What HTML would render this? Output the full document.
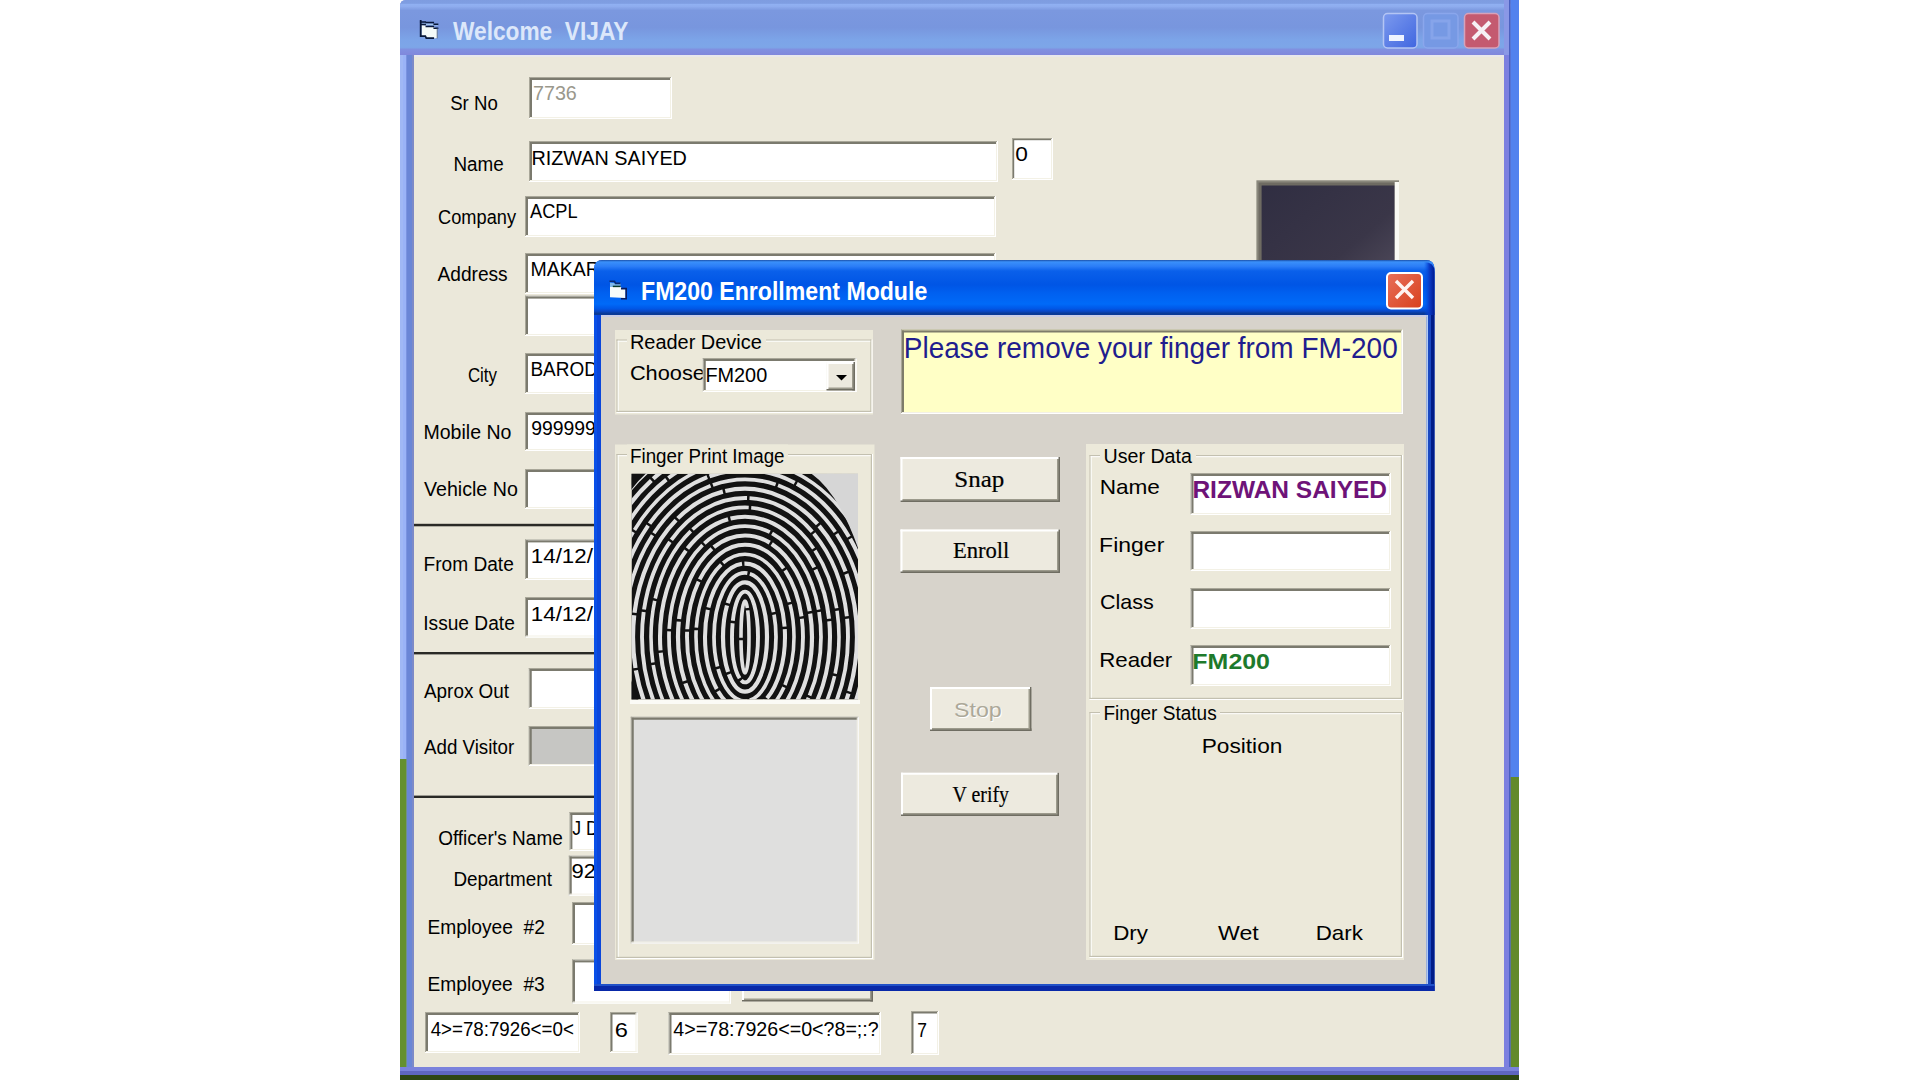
<!DOCTYPE html>
<html><head><meta charset="utf-8"><title>FM200 Enrollment Module</title>
<style>html,body{margin:0;padding:0;background:#FFFFFF;width:1920px;height:1080px;overflow:hidden}svg{display:block}</style>
</head><body>
<svg width="1920" height="1080" viewBox="0 0 1920 1080"><path d="M400,6 Q400,0 406,0 L1519,0 L1519,1075 L400,1075 Z" fill="#7A8DDF"/>
<defs>
<linearGradient id="tbi" x1="0" y1="0" x2="0" y2="1">
<stop offset="0" stop-color="#7E9CE0"/><stop offset="0.06" stop-color="#7F9EE2"/><stop offset="0.08" stop-color="#90B0F2"/>
<stop offset="0.12" stop-color="#8EACEE"/><stop offset="0.19" stop-color="#7B98DF"/><stop offset="0.5" stop-color="#7896DE"/><stop offset="0.72" stop-color="#7CA4E8"/>
<stop offset="0.86" stop-color="#7DA6E8"/><stop offset="0.9" stop-color="#8090E0"/><stop offset="1" stop-color="#8088DC"/>
</linearGradient>
<linearGradient id="tba" x1="0" y1="0" x2="0" y2="1">
<stop offset="0" stop-color="#1A50A8"/><stop offset="0.035" stop-color="#3A90FA"/><stop offset="0.12" stop-color="#2A7CF6"/>
<stop offset="0.2" stop-color="#0A60EA"/><stop offset="0.45" stop-color="#0055E5"/><stop offset="0.6" stop-color="#0060F0"/>
<stop offset="0.8" stop-color="#006AF8"/><stop offset="0.88" stop-color="#0058E8"/><stop offset="0.93" stop-color="#0A48C8"/>
<stop offset="0.97" stop-color="#0A3A98"/><stop offset="1" stop-color="#0A3A98"/>
</linearGradient>
<linearGradient id="minb" x1="0" y1="0" x2="1" y2="1">
<stop offset="0" stop-color="#7C9AEE"/><stop offset="1" stop-color="#4066E0"/>
</linearGradient>
<linearGradient id="clsb" x1="0" y1="0" x2="1" y2="1">
<stop offset="0" stop-color="#E8705A"/><stop offset="1" stop-color="#D8401C"/>
</linearGradient>
<linearGradient id="photo" x1="0" y1="0" x2="1" y2="1">
<stop offset="0" stop-color="#302E42"/><stop offset="0.6" stop-color="#3A3648"/><stop offset="1" stop-color="#555060"/>
</linearGradient>
<clipPath id="fpclip"><rect x="631.5" y="473.75" width="226.5" height="225.75"/></clipPath>
</defs>
<path d="M400,6 Q400,0 406,0 L1519,0 L1519,55 L400,55 Z" fill="url(#tbi)"/>
<rect x="400" y="55" width="3" height="1020" fill="#A0B8F5" />
<rect x="403" y="55" width="3.5" height="1020" fill="#9AB3F7" />
<rect x="406.5" y="55" width="5.5" height="1020" fill="#6A86D6" />
<rect x="412" y="55" width="2" height="1020" fill="#7C8AC8" />
<rect x="1503.5" y="55" width="5.5" height="1012" fill="#7C80E0" />
<rect x="1504" y="0" width="5" height="55" fill="#8A98E6" />
<rect x="1509" y="0" width="1.7" height="1075" fill="#4A60C0" />
<rect x="1510.7" y="0" width="8.3" height="777" fill="#5282EE" />
<rect x="1510.7" y="777" width="8.3" height="303" fill="#628A2A" />
<rect x="1503.5" y="1067" width="7.2" height="8" fill="#7A80E0" />
<rect x="400" y="759" width="6.5" height="321" fill="#64902E" />
<rect x="400" y="1067" width="1119" height="4" fill="#7A82DC" />
<rect x="400" y="1071" width="1119" height="4" fill="#5F66C0" />
<rect x="400" y="1075" width="1119" height="5" fill="#2E4614" />
<rect x="414" y="55" width="1090" height="1012" fill="#EBE8DA" />
<rect x="414" y="55" width="1090" height="2" fill="#E8E8EC" />
<g fill="none" stroke-linecap="square"><path d="M421.5,25 L433.5,26.8 L437,28.5 L437,38 L433.5,38.6 L426.5,37.8 L421.5,36.2 Z" fill="#F4FAF8" stroke="none"/><path d="M421,24 L425,24.2 L434,24.6 L437,25" fill="none" stroke="#A8CCEE" stroke-width="1.2"/><path d="M420.7,20.8 V36.2 H425.3 L426.3,38.2 H433.2" stroke="#08183A" stroke-width="1.8"/><path d="M420.7,21.9 H425.3 M426.3,22.4 H433.3 M421,24.4 H425.2 M434.2,24.3 H437.6 M426.3,26.4 H433.3 M434.2,28.2 H437.6" stroke="#08183A" stroke-width="1.5"/><path d="M437.2,29 V38" stroke="#6A7A90" stroke-width="1"/></g>
<text x="453.00" y="40" font-family="Liberation Sans" font-size="25" font-weight="700" fill="#DCE7FA" textLength="175.34" lengthAdjust="spacingAndGlyphs" xml:space="preserve" >Welcome  VIJAY</text>
<rect x="1383.5" y="13.5" width="33.5" height="34.5" rx="4" fill="url(#minb)" stroke="#B4C5F4" stroke-width="1.5"/>
<rect x="1389" y="35" width="15" height="6" fill="#EEF3FF" />
<rect x="1423.5" y="13.5" width="34.5" height="34.5" rx="4" fill="#7699E4" stroke="#8AA6EC" stroke-width="1.5"/>
<rect x="1432" y="21" width="17" height="17" fill="none" stroke="#86A4EA" stroke-width="3"/>
<rect x="1464.5" y="13.5" width="34.5" height="34.5" rx="4" fill="#C45A70" stroke="#D6A2BA" stroke-width="1.5"/>
<path d="M1473,22 L1490,39 M1490,22 L1473,39" stroke="#F6F0F4" stroke-width="4"/>
<text x="450.16" y="110" font-family="Liberation Sans" font-size="20" font-weight="400" fill="#000000" textLength="47.60" lengthAdjust="spacingAndGlyphs" xml:space="preserve" >Sr No</text>
<text x="453.49" y="171" font-family="Liberation Sans" font-size="20" font-weight="400" fill="#000000" textLength="50.28" lengthAdjust="spacingAndGlyphs" xml:space="preserve" >Name</text>
<text x="438.09" y="224" font-family="Liberation Sans" font-size="20" font-weight="400" fill="#000000" textLength="77.91" lengthAdjust="spacingAndGlyphs" xml:space="preserve" >Company</text>
<text x="437.50" y="281" font-family="Liberation Sans" font-size="20" font-weight="400" fill="#000000" textLength="70.17" lengthAdjust="spacingAndGlyphs" xml:space="preserve" >Address</text>
<text x="467.91" y="382" font-family="Liberation Sans" font-size="20" font-weight="400" fill="#000000" textLength="29.09" lengthAdjust="spacingAndGlyphs" xml:space="preserve" >City</text>
<text x="423.44" y="439" font-family="Liberation Sans" font-size="20" font-weight="400" fill="#000000" textLength="87.97" lengthAdjust="spacingAndGlyphs" xml:space="preserve" >Mobile No</text>
<text x="424.00" y="496" font-family="Liberation Sans" font-size="20" font-weight="400" fill="#000000" textLength="93.81" lengthAdjust="spacingAndGlyphs" xml:space="preserve" >Vehicle No</text>
<text x="423.47" y="570.6" font-family="Liberation Sans" font-size="20" font-weight="400" fill="#000000" textLength="90.32" lengthAdjust="spacingAndGlyphs" xml:space="preserve" >From Date</text>
<text x="423.28" y="630" font-family="Liberation Sans" font-size="20" font-weight="400" fill="#000000" textLength="91.51" lengthAdjust="spacingAndGlyphs" xml:space="preserve" >Issue Date</text>
<text x="424.00" y="697.5" font-family="Liberation Sans" font-size="20" font-weight="400" fill="#000000" textLength="85.05" lengthAdjust="spacingAndGlyphs" xml:space="preserve" >Aprox Out</text>
<text x="424.00" y="754.4" font-family="Liberation Sans" font-size="20" font-weight="400" fill="#000000" textLength="90.24" lengthAdjust="spacingAndGlyphs" xml:space="preserve" >Add Visitor</text>
<text x="438.15" y="845" font-family="Liberation Sans" font-size="20" font-weight="400" fill="#000000" textLength="124.64" lengthAdjust="spacingAndGlyphs" xml:space="preserve" >Officer's Name</text>
<text x="453.49" y="886" font-family="Liberation Sans" font-size="20" font-weight="400" fill="#000000" textLength="98.56" lengthAdjust="spacingAndGlyphs" xml:space="preserve" >Department</text>
<text x="427.46" y="933.75" font-family="Liberation Sans" font-size="20" font-weight="400" fill="#000000" textLength="117.42" lengthAdjust="spacingAndGlyphs" xml:space="preserve" >Employee  #2</text>
<text x="427.47" y="991" font-family="Liberation Sans" font-size="20" font-weight="400" fill="#000000" textLength="117.32" lengthAdjust="spacingAndGlyphs" xml:space="preserve" >Employee  #3</text>
<rect x="529" y="77" width="143" height="42" fill="#FFFFFF" />
<rect x="529" y="77" width="143" height="1" fill="#A9A799" />
<rect x="529" y="77" width="1" height="42" fill="#A9A799" />
<rect x="530" y="78" width="141" height="2.0" fill="#7B7A6E" />
<rect x="530" y="78" width="2.0" height="40" fill="#7B7A6E" />
<rect x="529" y="118" width="143" height="1" fill="#FFFFFF" />
<rect x="671" y="77" width="1" height="42" fill="#FFFFFF" />
<rect x="530" y="117" width="141" height="1" fill="#F3F1E6" />
<rect x="670" y="78" width="1" height="40" fill="#F3F1E6" />
<text x="533.02" y="100" font-family="Liberation Sans" font-size="20" font-weight="400" fill="#9A988C" textLength="43.79" lengthAdjust="spacingAndGlyphs" xml:space="preserve" >7736</text>
<rect x="529" y="141" width="469" height="41" fill="#FFFFFF" />
<rect x="529" y="141" width="469" height="1" fill="#A9A799" />
<rect x="529" y="141" width="1" height="41" fill="#A9A799" />
<rect x="530" y="142" width="467" height="2.0" fill="#7B7A6E" />
<rect x="530" y="142" width="2.0" height="39" fill="#7B7A6E" />
<rect x="529" y="181" width="469" height="1" fill="#FFFFFF" />
<rect x="997" y="141" width="1" height="41" fill="#FFFFFF" />
<rect x="530" y="180" width="467" height="1" fill="#F3F1E6" />
<rect x="996" y="142" width="1" height="39" fill="#F3F1E6" />
<text x="531.42" y="165" font-family="Liberation Sans" font-size="20" font-weight="400" fill="#000000" textLength="155.52" lengthAdjust="spacingAndGlyphs" xml:space="preserve" >RIZWAN SAIYED</text>
<rect x="1012" y="138" width="41" height="42" fill="#FFFFFF" />
<rect x="1012" y="138" width="41" height="1" fill="#A9A799" />
<rect x="1012" y="138" width="1" height="42" fill="#A9A799" />
<rect x="1013" y="139" width="39" height="1.2" fill="#7B7A6E" />
<rect x="1013" y="139" width="1.2" height="40" fill="#7B7A6E" />
<rect x="1012" y="179" width="41" height="1" fill="#FFFFFF" />
<rect x="1052" y="138" width="1" height="42" fill="#FFFFFF" />
<rect x="1013" y="178" width="39" height="1" fill="#F3F1E6" />
<rect x="1051" y="139" width="1" height="40" fill="#F3F1E6" />
<text x="1015.21" y="161" font-family="Liberation Sans" font-size="20" font-weight="400" fill="#000000" textLength="12.61" lengthAdjust="spacingAndGlyphs" xml:space="preserve" >0</text>
<rect x="525" y="196" width="471" height="41" fill="#FFFFFF" />
<rect x="525" y="196" width="471" height="1" fill="#A9A799" />
<rect x="525" y="196" width="1" height="41" fill="#A9A799" />
<rect x="526" y="197" width="469" height="2.0" fill="#7B7A6E" />
<rect x="526" y="197" width="2.0" height="39" fill="#7B7A6E" />
<rect x="525" y="236" width="471" height="1" fill="#FFFFFF" />
<rect x="995" y="196" width="1" height="41" fill="#FFFFFF" />
<rect x="526" y="235" width="469" height="1" fill="#F3F1E6" />
<rect x="994" y="197" width="1" height="39" fill="#F3F1E6" />
<text x="530.00" y="218" font-family="Liberation Sans" font-size="20" font-weight="400" fill="#000000" textLength="47.57" lengthAdjust="spacingAndGlyphs" xml:space="preserve" >ACPL</text>
<rect x="525" y="253" width="471" height="41" fill="#FFFFFF" />
<rect x="525" y="253" width="471" height="1" fill="#A9A799" />
<rect x="525" y="253" width="1" height="41" fill="#A9A799" />
<rect x="526" y="254" width="469" height="2.0" fill="#7B7A6E" />
<rect x="526" y="254" width="2.0" height="39" fill="#7B7A6E" />
<rect x="525" y="293" width="471" height="1" fill="#FFFFFF" />
<rect x="995" y="253" width="1" height="41" fill="#FFFFFF" />
<rect x="526" y="292" width="469" height="1" fill="#F3F1E6" />
<rect x="994" y="254" width="1" height="39" fill="#F3F1E6" />
<text x="530.44" y="276" font-family="Liberation Sans" font-size="20" font-weight="400" fill="#000000" textLength="69.38" lengthAdjust="spacingAndGlyphs" xml:space="preserve" >MAKAR</text>
<rect x="525" y="295.6" width="471" height="40.4" fill="#FFFFFF" />
<rect x="525" y="295.6" width="471" height="1.0" fill="#A9A799" />
<rect x="525" y="295.6" width="1" height="40.4" fill="#A9A799" />
<rect x="526" y="296.6" width="469" height="2.0" fill="#7B7A6E" />
<rect x="526" y="296.6" width="2.0" height="38.4" fill="#7B7A6E" />
<rect x="525" y="335" width="471" height="1" fill="#FFFFFF" />
<rect x="995" y="295.6" width="1" height="40.4" fill="#FFFFFF" />
<rect x="526" y="334" width="469" height="1" fill="#F3F1E6" />
<rect x="994" y="296.6" width="1" height="38.4" fill="#F3F1E6" />
<rect x="525" y="353" width="275" height="41" fill="#FFFFFF" />
<rect x="525" y="353" width="275" height="1" fill="#A9A799" />
<rect x="525" y="353" width="1" height="41" fill="#A9A799" />
<rect x="526" y="354" width="273" height="2.0" fill="#7B7A6E" />
<rect x="526" y="354" width="2.0" height="39" fill="#7B7A6E" />
<rect x="525" y="393" width="275" height="1" fill="#FFFFFF" />
<rect x="799" y="353" width="1" height="41" fill="#FFFFFF" />
<rect x="526" y="392" width="273" height="1" fill="#F3F1E6" />
<rect x="798" y="354" width="1" height="39" fill="#F3F1E6" />
<text x="530.48" y="375.6" font-family="Liberation Sans" font-size="20" font-weight="400" fill="#000000" textLength="67.41" lengthAdjust="spacingAndGlyphs" xml:space="preserve" >BAROD</text>
<rect x="525" y="412" width="275" height="39" fill="#FFFFFF" />
<rect x="525" y="412" width="275" height="1" fill="#A9A799" />
<rect x="525" y="412" width="1" height="39" fill="#A9A799" />
<rect x="526" y="413" width="273" height="2.0" fill="#7B7A6E" />
<rect x="526" y="413" width="2.0" height="37" fill="#7B7A6E" />
<rect x="525" y="450" width="275" height="1" fill="#FFFFFF" />
<rect x="799" y="412" width="1" height="39" fill="#FFFFFF" />
<rect x="526" y="449" width="273" height="1" fill="#F3F1E6" />
<rect x="798" y="413" width="1" height="37" fill="#F3F1E6" />
<text x="531.13" y="435" font-family="Liberation Sans" font-size="20" font-weight="400" fill="#000000" textLength="64.77" lengthAdjust="spacingAndGlyphs" xml:space="preserve" >999999</text>
<rect x="525" y="469" width="275" height="40" fill="#FFFFFF" />
<rect x="525" y="469" width="275" height="1" fill="#A9A799" />
<rect x="525" y="469" width="1" height="40" fill="#A9A799" />
<rect x="526" y="470" width="273" height="2.0" fill="#7B7A6E" />
<rect x="526" y="470" width="2.0" height="38" fill="#7B7A6E" />
<rect x="525" y="508" width="275" height="1" fill="#FFFFFF" />
<rect x="799" y="469" width="1" height="40" fill="#FFFFFF" />
<rect x="526" y="507" width="273" height="1" fill="#F3F1E6" />
<rect x="798" y="470" width="1" height="38" fill="#F3F1E6" />
<rect x="414" y="523.8" width="686" height="2.5" fill="#2A2A26" />
<rect x="525" y="539.4" width="275" height="40.6" fill="#FFFFFF" />
<rect x="525" y="539.4" width="275" height="1.0" fill="#A9A799" />
<rect x="525" y="539.4" width="1" height="40.6" fill="#A9A799" />
<rect x="526" y="540.4" width="273" height="2.0" fill="#7B7A6E" />
<rect x="526" y="540.4" width="2.0" height="38.6" fill="#7B7A6E" />
<rect x="525" y="579" width="275" height="1" fill="#FFFFFF" />
<rect x="799" y="539.4" width="1" height="40.6" fill="#FFFFFF" />
<rect x="526" y="578" width="273" height="1" fill="#F3F1E6" />
<rect x="798" y="540.4" width="1" height="38.6" fill="#F3F1E6" />
<text x="530.82" y="563" font-family="Liberation Sans" font-size="20" font-weight="400" fill="#000000" textLength="62.13" lengthAdjust="spacingAndGlyphs" xml:space="preserve" >14/12/</text>
<rect x="525" y="597" width="275" height="40.5" fill="#FFFFFF" />
<rect x="525" y="597" width="275" height="1" fill="#A9A799" />
<rect x="525" y="597" width="1" height="40.5" fill="#A9A799" />
<rect x="526" y="598" width="273" height="2.0" fill="#7B7A6E" />
<rect x="526" y="598" width="2.0" height="38.5" fill="#7B7A6E" />
<rect x="525" y="636.5" width="275" height="1.0" fill="#FFFFFF" />
<rect x="799" y="597" width="1" height="40.5" fill="#FFFFFF" />
<rect x="526" y="635.5" width="273" height="1.0" fill="#F3F1E6" />
<rect x="798" y="598" width="1" height="38.5" fill="#F3F1E6" />
<text x="530.82" y="620.6" font-family="Liberation Sans" font-size="20" font-weight="400" fill="#000000" textLength="62.13" lengthAdjust="spacingAndGlyphs" xml:space="preserve" >14/12/</text>
<rect x="414" y="652" width="686" height="2.4" fill="#2A2A26" />
<rect x="528.75" y="668" width="271.25" height="41" fill="#FFFFFF" />
<rect x="528.75" y="668" width="271.25" height="1" fill="#A9A799" />
<rect x="528.75" y="668" width="1.0" height="41" fill="#A9A799" />
<rect x="529.75" y="669" width="269.25" height="2.0" fill="#7B7A6E" />
<rect x="529.75" y="669" width="2.0" height="39" fill="#7B7A6E" />
<rect x="528.75" y="708" width="271.25" height="1" fill="#FFFFFF" />
<rect x="799" y="668" width="1" height="41" fill="#FFFFFF" />
<rect x="529.75" y="707" width="269.25" height="1" fill="#F3F1E6" />
<rect x="798" y="669" width="1" height="39" fill="#F3F1E6" />
<rect x="528.75" y="726" width="271.25" height="40" fill="#C6C6C3" />
<rect x="528.75" y="726" width="271.25" height="1" fill="#A9A799" />
<rect x="528.75" y="726" width="1.0" height="40" fill="#A9A799" />
<rect x="529.75" y="727" width="269.25" height="2.0" fill="#7B7A6E" />
<rect x="529.75" y="727" width="2.0" height="38" fill="#7B7A6E" />
<rect x="528.75" y="765" width="271.25" height="1" fill="#FFFFFF" />
<rect x="799" y="726" width="1" height="40" fill="#FFFFFF" />
<rect x="529.75" y="764" width="269.25" height="1" fill="#F3F1E6" />
<rect x="798" y="727" width="1" height="38" fill="#F3F1E6" />
<rect x="414" y="795.6" width="686" height="2.4" fill="#2A2A26" />
<rect x="569.4" y="812" width="230.6" height="39" fill="#FFFFFF" />
<rect x="569.4" y="812" width="230.6" height="1" fill="#A9A799" />
<rect x="569.4" y="812" width="1.0" height="39" fill="#A9A799" />
<rect x="570.4" y="813" width="228.6" height="2.0" fill="#7B7A6E" />
<rect x="570.4" y="813" width="2.0" height="37" fill="#7B7A6E" />
<rect x="569.4" y="850" width="230.6" height="1" fill="#FFFFFF" />
<rect x="799" y="812" width="1" height="39" fill="#FFFFFF" />
<rect x="570.4" y="849" width="228.6" height="1" fill="#F3F1E6" />
<rect x="798" y="813" width="1" height="37" fill="#F3F1E6" />
<text x="572.23" y="835" font-family="Liberation Sans" font-size="20" font-weight="400" fill="#000000" textLength="26.60" lengthAdjust="spacingAndGlyphs" xml:space="preserve" >J D</text>
<rect x="568.75" y="855.6" width="231.25" height="40.0" fill="#FFFFFF" />
<rect x="568.75" y="855.6" width="231.25" height="1.0" fill="#A9A799" />
<rect x="568.75" y="855.6" width="1.0" height="40.0" fill="#A9A799" />
<rect x="569.75" y="856.6" width="229.25" height="2.0" fill="#7B7A6E" />
<rect x="569.75" y="856.6" width="2.0" height="38.0" fill="#7B7A6E" />
<rect x="568.75" y="894.6" width="231.25" height="1.0" fill="#FFFFFF" />
<rect x="799" y="855.6" width="1" height="40.0" fill="#FFFFFF" />
<rect x="569.75" y="893.6" width="229.25" height="1.0" fill="#F3F1E6" />
<rect x="798" y="856.6" width="1" height="38.0" fill="#F3F1E6" />
<text x="571.51" y="878" font-family="Liberation Sans" font-size="20" font-weight="400" fill="#000000" textLength="24.51" lengthAdjust="spacingAndGlyphs" xml:space="preserve" >92</text>
<rect x="572" y="902" width="228" height="43" fill="#FFFFFF" />
<rect x="572" y="902" width="228" height="1" fill="#A9A799" />
<rect x="572" y="902" width="1" height="43" fill="#A9A799" />
<rect x="573" y="903" width="226" height="2.0" fill="#7B7A6E" />
<rect x="573" y="903" width="2.0" height="41" fill="#7B7A6E" />
<rect x="572" y="944" width="228" height="1" fill="#FFFFFF" />
<rect x="799" y="902" width="1" height="43" fill="#FFFFFF" />
<rect x="573" y="943" width="226" height="1" fill="#F3F1E6" />
<rect x="798" y="903" width="1" height="41" fill="#F3F1E6" />
<rect x="572" y="959.4" width="159" height="44.1" fill="#FFFFFF" />
<rect x="572" y="959.4" width="159" height="1.0" fill="#A9A799" />
<rect x="572" y="959.4" width="1" height="44.1" fill="#A9A799" />
<rect x="573" y="960.4" width="157" height="2.0" fill="#7B7A6E" />
<rect x="573" y="960.4" width="2.0" height="42.1" fill="#7B7A6E" />
<rect x="572" y="1002.5" width="159" height="1.0" fill="#FFFFFF" />
<rect x="730" y="959.4" width="1" height="44.1" fill="#FFFFFF" />
<rect x="573" y="1001.5" width="157" height="1.0" fill="#F3F1E6" />
<rect x="729" y="960.4" width="1" height="42.1" fill="#F3F1E6" />
<rect x="742" y="960" width="131" height="41.5" fill="#EDEADF" />
<rect x="742" y="960" width="131" height="2" fill="#FFFFFF" />
<rect x="742" y="960" width="2" height="41.5" fill="#FFFFFF" />
<rect x="744" y="998.5" width="129" height="2.0" fill="#9C9A8C" />
<rect x="870" y="962" width="2" height="39.5" fill="#9C9A8C" />
<rect x="742" y="1000.0" width="131" height="1.5" fill="#6F6D62" />
<rect x="871.5" y="960" width="1.5" height="41.5" fill="#6F6D62" />
<rect x="425" y="1012" width="155" height="41" fill="#FFFFFF" />
<rect x="425" y="1012" width="155" height="1" fill="#A9A799" />
<rect x="425" y="1012" width="1" height="41" fill="#A9A799" />
<rect x="426" y="1013" width="153" height="2.0" fill="#7B7A6E" />
<rect x="426" y="1013" width="2.0" height="39" fill="#7B7A6E" />
<rect x="425" y="1052" width="155" height="1" fill="#FFFFFF" />
<rect x="579" y="1012" width="1" height="41" fill="#FFFFFF" />
<rect x="426" y="1051" width="153" height="1" fill="#F3F1E6" />
<rect x="578" y="1013" width="1" height="39" fill="#F3F1E6" />
<text x="430.63" y="1036" font-family="Liberation Sans" font-size="20" font-weight="400" fill="#000000" textLength="143.20" lengthAdjust="spacingAndGlyphs" xml:space="preserve" >4&gt;=78:7926&lt;=0&lt;</text>
<rect x="610" y="1012" width="27.5" height="41" fill="#FFFFFF" />
<rect x="610" y="1012" width="27.5" height="1" fill="#A9A799" />
<rect x="610" y="1012" width="1" height="41" fill="#A9A799" />
<rect x="611" y="1013" width="25.5" height="1.5" fill="#7B7A6E" />
<rect x="611" y="1013" width="1.5" height="39" fill="#7B7A6E" />
<rect x="610" y="1052" width="27.5" height="1" fill="#FFFFFF" />
<rect x="636.5" y="1012" width="1.0" height="41" fill="#FFFFFF" />
<rect x="611" y="1051" width="25.5" height="1" fill="#F3F1E6" />
<rect x="635.5" y="1013" width="1.0" height="39" fill="#F3F1E6" />
<text x="614.82" y="1036.5" font-family="Liberation Sans" font-size="20" font-weight="400" fill="#000000" textLength="13.16" lengthAdjust="spacingAndGlyphs" xml:space="preserve" >6</text>
<rect x="668.5" y="1012" width="212.5" height="43" fill="#FFFFFF" />
<rect x="668.5" y="1012" width="212.5" height="1" fill="#A9A799" />
<rect x="668.5" y="1012" width="1.0" height="43" fill="#A9A799" />
<rect x="669.5" y="1013" width="210.5" height="2.0" fill="#7B7A6E" />
<rect x="669.5" y="1013" width="2.0" height="41" fill="#7B7A6E" />
<rect x="668.5" y="1054" width="212.5" height="1" fill="#FFFFFF" />
<rect x="880" y="1012" width="1" height="43" fill="#FFFFFF" />
<rect x="669.5" y="1053" width="210.5" height="1" fill="#F3F1E6" />
<rect x="879" y="1013" width="1" height="41" fill="#F3F1E6" />
<text x="673.36" y="1036" font-family="Liberation Sans" font-size="20" font-weight="400" fill="#000000" textLength="205.35" lengthAdjust="spacingAndGlyphs" xml:space="preserve" >4&gt;=78:7926&lt;=0&lt;?8=;:?</text>
<rect x="911" y="1011" width="28" height="44" fill="#FFFFFF" />
<rect x="911" y="1011" width="28" height="1" fill="#A9A799" />
<rect x="911" y="1011" width="1" height="44" fill="#A9A799" />
<rect x="912" y="1012" width="26" height="1.5" fill="#7B7A6E" />
<rect x="912" y="1012" width="1.5" height="42" fill="#7B7A6E" />
<rect x="911" y="1054" width="28" height="1" fill="#FFFFFF" />
<rect x="938" y="1011" width="1" height="44" fill="#FFFFFF" />
<rect x="912" y="1053" width="26" height="1" fill="#F3F1E6" />
<rect x="937" y="1012" width="1" height="42" fill="#F3F1E6" />
<text x="917.13" y="1036.6" font-family="Liberation Sans" font-size="20" font-weight="400" fill="#000000" textLength="9.67" lengthAdjust="spacingAndGlyphs" xml:space="preserve" >7</text>
<rect x="1256.4" y="180.3" width="142.6" height="119.7" fill="#8A887C" />
<rect x="1258.5" y="182.5" width="140.5" height="117.5" fill="#6E6B62" />
<rect x="1261.6" y="185.5" width="133.1" height="114.5" fill="url(#photo)" />
<rect x="1394.7" y="182" width="4.3" height="118" fill="#FAFAF4" />
<path d="M594,269 Q594,260 603,260 L1425.5,260 Q1434.5,260 1434.5,269 L1434.5,991 L594,991 Z" fill="#0A46DA"/>
<path d="M594,269 Q594,260 603,260 L1425.5,260 Q1434.5,260 1434.5,269 L1434.5,315 L594,315 Z" fill="url(#tba)"/>
<rect x="594" y="315" width="3" height="676" fill="#0A50E8" />
<rect x="1426.5" y="315" width="1.5" height="669" fill="#B0CAF6" />
<rect x="1428" y="315" width="3" height="676" fill="#1A48C0" />
<rect x="1431" y="315" width="3.5" height="676" fill="#001C88" />
<rect x="594" y="984" width="840.5" height="2" fill="#2050C8" />
<rect x="594" y="986" width="840.5" height="5" fill="#0828A8" />
<rect x="601" y="315" width="825.5" height="669" fill="#D7D3CB" />
<rect x="601" y="315" width="825.5" height="2" fill="#CACDE6" />
<defs><linearGradient id="dre" x1="0" y1="0" x2="1" y2="0"><stop offset="0" stop-color="#0050E8" stop-opacity="0"/><stop offset="0.5" stop-color="#0A3CC8"/><stop offset="1" stop-color="#001A90"/></linearGradient></defs>
<path d="M1424,262 Q1434.5,262 1434.5,272 L1434.5,315 L1424,315 Z" fill="url(#dre)"/>
<g fill="none"><path d="M610,282.5 L620.5,283.5 L620.5,287 L610,287 Z" fill="#7EB8EC"/><path d="M610,287 L621,287 L622,289 L625.5,289 L625.5,298 L610,297.2 Z" fill="#F6FBFA"/><path d="M609.5,281.2 H614.5 L615.5,283.4 H620.4" stroke="#0A2A70" stroke-width="1.6"/><path d="M612.8,286.4 H620.6" stroke="#0A3A2A" stroke-width="1.5"/><path d="M621,288.6 H626.2 V298.8 H621" stroke="#0A1E60" stroke-width="1.6"/></g>
<text x="641.02" y="299.5" font-family="Liberation Sans" font-size="25" font-weight="700" fill="#FFFFFF" textLength="286.22" lengthAdjust="spacingAndGlyphs" xml:space="preserve" >FM200 Enrollment Module</text>
<rect x="1387" y="273" width="35" height="35.5" rx="4" fill="url(#clsb)" stroke="#FFFFFF" stroke-width="2"/>
<path d="M1396,281 L1413,298 M1413,281 L1396,298" stroke="#FFF4F0" stroke-width="3.4"/>
<rect x="615" y="330" width="258" height="84.5" fill="#ECE9DA" />
<rect x="616.5" y="339.5" width="255.0" height="1.2" fill="#C3C0B0" />
<rect x="616.5" y="339.5" width="1.2" height="72.5" fill="#C3C0B0" />
<rect x="616.5" y="410.8" width="255.0" height="1.2" fill="#C3C0B0" />
<rect x="870.3" y="339.5" width="1.2" height="72.5" fill="#C3C0B0" />
<rect x="617.7" y="340.7" width="252.6" height="1.0" fill="#FFFFFF" />
<rect x="617.7" y="340.7" width="1.0" height="70.1" fill="#FFFFFF" />
<rect x="616.5" y="412" width="256.0" height="1" fill="#FFFFFF" />
<rect x="871.5" y="339.5" width="1.0" height="73.5" fill="#FFFFFF" />
<rect x="627" y="330" width="139" height="16" fill="#ECE9DA" />
<text x="629.90" y="348.5" font-family="Liberation Sans" font-size="20" font-weight="400" fill="#000000" textLength="131.92" lengthAdjust="spacingAndGlyphs" xml:space="preserve" >Reader Device</text>
<text x="629.91" y="380" font-family="Liberation Sans" font-size="20" font-weight="400" fill="#000000" textLength="74.98" lengthAdjust="spacingAndGlyphs" xml:space="preserve" >Choose</text>
<rect x="702.75" y="358" width="153.75" height="34" fill="#FFFFFF" />
<rect x="702.75" y="358" width="153.75" height="1" fill="#A9A799" />
<rect x="702.75" y="358" width="1.0" height="34" fill="#A9A799" />
<rect x="703.75" y="359" width="151.75" height="2.0" fill="#7B7A6E" />
<rect x="703.75" y="359" width="2.0" height="32" fill="#7B7A6E" />
<rect x="702.75" y="391" width="153.75" height="1" fill="#FFFFFF" />
<rect x="855.5" y="358" width="1.0" height="34" fill="#FFFFFF" />
<rect x="703.75" y="390" width="151.75" height="1" fill="#F3F1E6" />
<rect x="854.5" y="359" width="1.0" height="32" fill="#F3F1E6" />
<text x="705.41" y="381.5" font-family="Liberation Sans" font-size="20" font-weight="400" fill="#000000" textLength="61.81" lengthAdjust="spacingAndGlyphs" xml:space="preserve" >FM200</text>
<rect x="826.5" y="362" width="28.5" height="28.5" fill="#ECE9DE" />
<rect x="826.5" y="362" width="28.5" height="2" fill="#FFFFFF" />
<rect x="826.5" y="362" width="2.0" height="28.5" fill="#FFFFFF" />
<rect x="828.5" y="387.5" width="26.5" height="2.0" fill="#9C9A8C" />
<rect x="852" y="364" width="2" height="26.5" fill="#9C9A8C" />
<rect x="826.5" y="389.0" width="28.5" height="1.5" fill="#6F6D62" />
<rect x="853.5" y="362" width="1.5" height="28.5" fill="#6F6D62" />
<path d="M836,375 L847,375 L841.5,380.5 Z" fill="#000"/>
<rect x="901" y="329.5" width="502" height="84.5" fill="#FFFFC6" />
<rect x="901" y="329.5" width="502" height="1.0" fill="#A9A799" />
<rect x="901" y="329.5" width="1" height="84.5" fill="#A9A799" />
<rect x="902" y="330.5" width="500" height="2.0" fill="#7E7C6A" />
<rect x="902" y="330.5" width="2.0" height="82.5" fill="#7E7C6A" />
<rect x="901" y="413" width="502" height="1" fill="#FFFFFF" />
<rect x="1402" y="329.5" width="1" height="84.5" fill="#FFFFFF" />
<rect x="902" y="412" width="500" height="1" fill="#F3F1E6" />
<rect x="1401" y="330.5" width="1" height="82.5" fill="#F3F1E6" />
<text x="903.82" y="358" font-family="Liberation Sans" font-size="29" font-weight="400" fill="#211D8E" textLength="493.88" lengthAdjust="spacingAndGlyphs" xml:space="preserve" >Please remove your finger from FM-200</text>
<rect x="615" y="444.5" width="259.5" height="515.5" fill="#ECE9DA" />
<rect x="616.5" y="454" width="255.5" height="1.2" fill="#C3C0B0" />
<rect x="616.5" y="454" width="1.2" height="504" fill="#C3C0B0" />
<rect x="616.5" y="956.8" width="255.5" height="1.2" fill="#C3C0B0" />
<rect x="870.8" y="454" width="1.2" height="504" fill="#C3C0B0" />
<rect x="617.7" y="455.2" width="253.1" height="1.0" fill="#FFFFFF" />
<rect x="617.7" y="455.2" width="1.0" height="501.6" fill="#FFFFFF" />
<rect x="616.5" y="958" width="256.5" height="1" fill="#FFFFFF" />
<rect x="872" y="454" width="1" height="505" fill="#FFFFFF" />
<rect x="627" y="444.5" width="161" height="15.5" fill="#ECE9DA" />
<text x="630.00" y="462.5" font-family="Liberation Sans" font-size="20" font-weight="400" fill="#000000" textLength="154.53" lengthAdjust="spacingAndGlyphs" xml:space="preserve" >Finger Print Image</text>
<g clip-path="url(#fpclip)"><rect x="631.5" y="473.75" width="226.5" height="225.75" fill="#121212"/><ellipse cx="745" cy="637" rx="4.0" ry="36.0" fill="none" stroke="#E0E0E0" stroke-width="3.60" stroke-dasharray="70,2.5,45,2.5" stroke-dashoffset="0"/><ellipse cx="745" cy="637" rx="13.0" ry="45.4" fill="none" stroke="#E0E0E0" stroke-width="3.90" stroke-dasharray="83,2.5,56,2.5" stroke-dashoffset="29"/><ellipse cx="745" cy="637" rx="22.0" ry="54.7" fill="none" stroke="#E0E0E0" stroke-width="4.20" stroke-dasharray="96,2.5,67,2.5" stroke-dashoffset="8"/><ellipse cx="745" cy="637" rx="31.0" ry="64.1" fill="none" stroke="#E0E0E0" stroke-width="3.75" stroke-dasharray="109,2.5,47,2.5" stroke-dashoffset="37"/><ellipse cx="745" cy="637" rx="40.0" ry="73.4" fill="none" stroke="#E0E0E0" stroke-width="4.05" stroke-dasharray="81,2.5,58,2.5" stroke-dashoffset="16"/><ellipse cx="745" cy="637" rx="49.0" ry="82.8" fill="none" stroke="#E0E0E0" stroke-width="3.60" stroke-dasharray="94,2.5,69,2.5" stroke-dashoffset="45"/><ellipse cx="745" cy="637" rx="58.0" ry="92.2" fill="none" stroke="#E0E0E0" stroke-width="3.90" stroke-dasharray="107,2.5,49,2.5" stroke-dashoffset="24"/><ellipse cx="745" cy="637" rx="67.0" ry="101.5" fill="none" stroke="#E0E0E0" stroke-width="4.20" stroke-dasharray="79,2.5,60,2.5" stroke-dashoffset="3"/><ellipse cx="745" cy="637" rx="76.0" ry="110.9" fill="none" stroke="#E0E0E0" stroke-width="3.75" stroke-dasharray="92,2.5,71,2.5" stroke-dashoffset="32"/><ellipse cx="745" cy="637" rx="85.0" ry="120.2" fill="none" stroke="#E0E0E0" stroke-width="4.05" stroke-dasharray="105,2.5,51,2.5" stroke-dashoffset="11"/><ellipse cx="745" cy="637" rx="94.0" ry="129.6" fill="none" stroke="#E0E0E0" stroke-width="3.60" stroke-dasharray="77,2.5,62,2.5" stroke-dashoffset="40"/><ellipse cx="745" cy="637" rx="103.0" ry="139.0" fill="none" stroke="#E0E0E0" stroke-width="3.90" stroke-dasharray="90,2.5,73,2.5" stroke-dashoffset="19"/><ellipse cx="745" cy="637" rx="112.0" ry="148.3" fill="none" stroke="#E0E0E0" stroke-width="4.20" stroke-dasharray="103,2.5,53,2.5" stroke-dashoffset="48"/><ellipse cx="745" cy="637" rx="121.0" ry="157.7" fill="none" stroke="#E0E0E0" stroke-width="3.75" stroke-dasharray="75,2.5,64,2.5" stroke-dashoffset="27"/><ellipse cx="745" cy="637" rx="130.0" ry="167.0" fill="none" stroke="#E0E0E0" stroke-width="4.05" stroke-dasharray="88,2.5,75,2.5" stroke-dashoffset="6"/><ellipse cx="745" cy="637" rx="139.0" ry="176.4" fill="none" stroke="#E0E0E0" stroke-width="3.60" stroke-dasharray="101,2.5,55,2.5" stroke-dashoffset="35"/><ellipse cx="745" cy="637" rx="148.0" ry="185.8" fill="none" stroke="#E0E0E0" stroke-width="3.90" stroke-dasharray="73,2.5,66,2.5" stroke-dashoffset="14"/><ellipse cx="745" cy="637" rx="157.0" ry="195.1" fill="none" stroke="#E0E0E0" stroke-width="4.20" stroke-dasharray="86,2.5,46,2.5" stroke-dashoffset="43"/><ellipse cx="745" cy="637" rx="166.0" ry="204.5" fill="none" stroke="#E0E0E0" stroke-width="3.75" stroke-dasharray="99,2.5,57,2.5" stroke-dashoffset="22"/><ellipse cx="745" cy="637" rx="175.0" ry="213.8" fill="none" stroke="#E0E0E0" stroke-width="4.05" stroke-dasharray="71,2.5,68,2.5" stroke-dashoffset="1"/><ellipse cx="745" cy="637" rx="184.0" ry="223.2" fill="none" stroke="#E0E0E0" stroke-width="3.60" stroke-dasharray="84,2.5,48,2.5" stroke-dashoffset="30"/><ellipse cx="745" cy="637" rx="193.0" ry="232.6" fill="none" stroke="#E0E0E0" stroke-width="3.90" stroke-dasharray="97,2.5,59,2.5" stroke-dashoffset="9"/><ellipse cx="745" cy="637" rx="202.0" ry="241.9" fill="none" stroke="#E0E0E0" stroke-width="4.20" stroke-dasharray="110,2.5,70,2.5" stroke-dashoffset="38"/><ellipse cx="745" cy="637" rx="211.0" ry="251.3" fill="none" stroke="#E0E0E0" stroke-width="3.75" stroke-dasharray="82,2.5,50,2.5" stroke-dashoffset="17"/><ellipse cx="745" cy="637" rx="220.0" ry="260.6" fill="none" stroke="#E0E0E0" stroke-width="4.05" stroke-dasharray="95,2.5,61,2.5" stroke-dashoffset="46"/><path d="M806,470 Q840,490 862,560 L862,470 Z" fill="#D6D6D6"/><path d="M631,470 L650,470 Q640,478 631,490 Z" fill="#121212"/><path d="M631,680 L631,704 L640,704 Z" fill="#121212"/></g>
<rect x="630" y="700" width="230" height="4" fill="#FBFBF6" />
<rect x="630.75" y="716.75" width="228.0" height="226.75" fill="#DFDFDE" />
<rect x="630.75" y="716.75" width="228.0" height="1.0" fill="#A9A799" />
<rect x="630.75" y="716.75" width="1.0" height="226.75" fill="#A9A799" />
<rect x="631.75" y="717.75" width="226.0" height="2.0" fill="#7B7A6E" />
<rect x="631.75" y="717.75" width="2.0" height="224.75" fill="#7B7A6E" />
<rect x="630.75" y="942.5" width="228.0" height="1.0" fill="#FFFFFF" />
<rect x="857.75" y="716.75" width="1.0" height="226.75" fill="#FFFFFF" />
<rect x="631.75" y="941.5" width="226.0" height="1.0" fill="#F3F1E6" />
<rect x="856.75" y="717.75" width="1.0" height="224.75" fill="#F3F1E6" />
<rect x="900.5" y="457" width="159.5" height="45" fill="#EDEADF" />
<rect x="900.5" y="457" width="159.5" height="2" fill="#FFFFFF" />
<rect x="900.5" y="457" width="2.0" height="45" fill="#FFFFFF" />
<rect x="902.5" y="499" width="157.5" height="2" fill="#9C9A8C" />
<rect x="1057" y="459" width="2" height="43" fill="#9C9A8C" />
<rect x="900.5" y="500.5" width="159.5" height="1.5" fill="#6F6D62" />
<rect x="1058.5" y="457" width="1.5" height="45" fill="#6F6D62" />
<text x="954.37" y="486.5" font-family="Liberation Serif" font-size="23" font-weight="400" fill="#000000" textLength="50.00" lengthAdjust="spacingAndGlyphs" xml:space="preserve" stroke="#000" stroke-width="0.2">Snap</text>
<rect x="900.5" y="529.5" width="159.5" height="43.5" fill="#EDEADF" />
<rect x="900.5" y="529.5" width="159.5" height="2.0" fill="#FFFFFF" />
<rect x="900.5" y="529.5" width="2.0" height="43.5" fill="#FFFFFF" />
<rect x="902.5" y="570" width="157.5" height="2" fill="#9C9A8C" />
<rect x="1057" y="531.5" width="2" height="41.5" fill="#9C9A8C" />
<rect x="900.5" y="571.5" width="159.5" height="1.5" fill="#6F6D62" />
<rect x="1058.5" y="529.5" width="1.5" height="43.5" fill="#6F6D62" />
<text x="952.91" y="557.5" font-family="Liberation Serif" font-size="23" font-weight="400" fill="#000000" textLength="56.47" lengthAdjust="spacingAndGlyphs" xml:space="preserve" stroke="#000" stroke-width="0.2">Enroll</text>
<rect x="930" y="687" width="101.5" height="44" fill="#EDEADF" />
<rect x="930" y="687" width="101.5" height="2" fill="#FFFFFF" />
<rect x="930" y="687" width="2" height="44" fill="#FFFFFF" />
<rect x="932" y="728" width="99.5" height="2" fill="#9C9A8C" />
<rect x="1028.5" y="689" width="2.0" height="42" fill="#9C9A8C" />
<rect x="930" y="729.5" width="101.5" height="1.5" fill="#6F6D62" />
<rect x="1030.0" y="687" width="1.5" height="44" fill="#6F6D62" />
<text x="955.01" y="717.5" font-family="Liberation Sans" font-size="21" font-weight="400" fill="#FFFFFF" textLength="47.72" lengthAdjust="spacingAndGlyphs" xml:space="preserve" >Stop</text>
<text x="954.01" y="716.5" font-family="Liberation Sans" font-size="21" font-weight="400" fill="#ACA899" textLength="47.72" lengthAdjust="spacingAndGlyphs" xml:space="preserve" >Stop</text>
<rect x="901" y="772.75" width="158" height="43.25" fill="#EDEADF" />
<rect x="901" y="772.75" width="158" height="2.0" fill="#FFFFFF" />
<rect x="901" y="772.75" width="2" height="43.25" fill="#FFFFFF" />
<rect x="903" y="813" width="156" height="2" fill="#9C9A8C" />
<rect x="1056" y="774.75" width="2" height="41.25" fill="#9C9A8C" />
<rect x="901" y="814.5" width="158" height="1.5" fill="#6F6D62" />
<rect x="1057.5" y="772.75" width="1.5" height="43.25" fill="#6F6D62" />
<text x="952.58" y="802" font-family="Liberation Serif" font-size="23" font-weight="400" fill="#000000" textLength="56.42" lengthAdjust="spacingAndGlyphs" xml:space="preserve" stroke="#000" stroke-width="0.2">V erify</text>
<rect x="1086" y="444" width="318" height="257" fill="#ECE9DA" />
<rect x="1089.5" y="455" width="312.5" height="1.2" fill="#C3C0B0" />
<rect x="1089.5" y="455" width="1.2" height="244" fill="#C3C0B0" />
<rect x="1089.5" y="697.8" width="312.5" height="1.2" fill="#C3C0B0" />
<rect x="1400.8" y="455" width="1.2" height="244" fill="#C3C0B0" />
<rect x="1090.7" y="456.2" width="310.1" height="1.0" fill="#FFFFFF" />
<rect x="1090.7" y="456.2" width="1.0" height="241.6" fill="#FFFFFF" />
<rect x="1089.5" y="699" width="313.5" height="1" fill="#FFFFFF" />
<rect x="1402" y="455" width="1" height="245" fill="#FFFFFF" />
<rect x="1100" y="444" width="96" height="15" fill="#ECE9DA" />
<text x="1103.53" y="463" font-family="Liberation Sans" font-size="20" font-weight="400" fill="#000000" textLength="88.40" lengthAdjust="spacingAndGlyphs" xml:space="preserve" >User Data</text>
<text x="1099.67" y="494" font-family="Liberation Sans" font-size="21" font-weight="400" fill="#000000" textLength="60.28" lengthAdjust="spacingAndGlyphs" xml:space="preserve" >Name</text>
<rect x="1190.5" y="473" width="200.5" height="42" fill="#FFFFFF" />
<rect x="1190.5" y="473" width="200.5" height="1" fill="#A9A799" />
<rect x="1190.5" y="473" width="1.0" height="42" fill="#A9A799" />
<rect x="1191.5" y="474" width="198.5" height="2.0" fill="#7B7A6E" />
<rect x="1191.5" y="474" width="2.0" height="40" fill="#7B7A6E" />
<rect x="1190.5" y="514" width="200.5" height="1" fill="#FFFFFF" />
<rect x="1390" y="473" width="1" height="42" fill="#FFFFFF" />
<rect x="1191.5" y="513" width="198.5" height="1" fill="#F3F1E6" />
<rect x="1389" y="474" width="1" height="40" fill="#F3F1E6" />
<text x="1192.44" y="498" font-family="Liberation Sans" font-size="23.5" font-weight="700" fill="#6E1378" textLength="194.58" lengthAdjust="spacingAndGlyphs" xml:space="preserve" >RIZWAN SAIYED</text>
<text x="1099.14" y="552" font-family="Liberation Sans" font-size="21" font-weight="400" fill="#000000" textLength="65.18" lengthAdjust="spacingAndGlyphs" xml:space="preserve" >Finger</text>
<rect x="1190.5" y="531" width="200.5" height="40" fill="#FFFFFF" />
<rect x="1190.5" y="531" width="200.5" height="1" fill="#A9A799" />
<rect x="1190.5" y="531" width="1.0" height="40" fill="#A9A799" />
<rect x="1191.5" y="532" width="198.5" height="2.0" fill="#7B7A6E" />
<rect x="1191.5" y="532" width="2.0" height="38" fill="#7B7A6E" />
<rect x="1190.5" y="570" width="200.5" height="1" fill="#FFFFFF" />
<rect x="1390" y="531" width="1" height="40" fill="#FFFFFF" />
<rect x="1191.5" y="569" width="198.5" height="1" fill="#F3F1E6" />
<rect x="1389" y="532" width="1" height="38" fill="#F3F1E6" />
<text x="1099.98" y="609" font-family="Liberation Sans" font-size="21" font-weight="400" fill="#000000" textLength="53.74" lengthAdjust="spacingAndGlyphs" xml:space="preserve" >Class</text>
<rect x="1190.5" y="588" width="200.5" height="41" fill="#FFFFFF" />
<rect x="1190.5" y="588" width="200.5" height="1" fill="#A9A799" />
<rect x="1190.5" y="588" width="1.0" height="41" fill="#A9A799" />
<rect x="1191.5" y="589" width="198.5" height="2.0" fill="#7B7A6E" />
<rect x="1191.5" y="589" width="2.0" height="39" fill="#7B7A6E" />
<rect x="1190.5" y="628" width="200.5" height="1" fill="#FFFFFF" />
<rect x="1390" y="588" width="1" height="41" fill="#FFFFFF" />
<rect x="1191.5" y="627" width="198.5" height="1" fill="#F3F1E6" />
<rect x="1389" y="589" width="1" height="39" fill="#F3F1E6" />
<text x="1099.20" y="667" font-family="Liberation Sans" font-size="21" font-weight="400" fill="#000000" textLength="73.12" lengthAdjust="spacingAndGlyphs" xml:space="preserve" >Reader</text>
<rect x="1190.5" y="645" width="200.5" height="41" fill="#FFFFFF" />
<rect x="1190.5" y="645" width="200.5" height="1" fill="#A9A799" />
<rect x="1190.5" y="645" width="1.0" height="41" fill="#A9A799" />
<rect x="1191.5" y="646" width="198.5" height="2.0" fill="#7B7A6E" />
<rect x="1191.5" y="646" width="2.0" height="39" fill="#7B7A6E" />
<rect x="1190.5" y="685" width="200.5" height="1" fill="#FFFFFF" />
<rect x="1390" y="645" width="1" height="41" fill="#FFFFFF" />
<rect x="1191.5" y="684" width="198.5" height="1" fill="#F3F1E6" />
<rect x="1389" y="646" width="1" height="39" fill="#F3F1E6" />
<text x="1192.38" y="669" font-family="Liberation Sans" font-size="21.5" font-weight="700" fill="#1E7A2C" textLength="77.62" lengthAdjust="spacingAndGlyphs" xml:space="preserve" >FM200</text>
<rect x="1086" y="701" width="318" height="259" fill="#ECE9DA" />
<rect x="1089.5" y="712" width="312.5" height="1.2" fill="#C3C0B0" />
<rect x="1089.5" y="712" width="1.2" height="245" fill="#C3C0B0" />
<rect x="1089.5" y="955.8" width="312.5" height="1.2" fill="#C3C0B0" />
<rect x="1400.8" y="712" width="1.2" height="245" fill="#C3C0B0" />
<rect x="1090.7" y="713.2" width="310.1" height="1.0" fill="#FFFFFF" />
<rect x="1090.7" y="713.2" width="1.0" height="242.6" fill="#FFFFFF" />
<rect x="1089.5" y="957" width="313.5" height="1" fill="#FFFFFF" />
<rect x="1402" y="712" width="1" height="246" fill="#FFFFFF" />
<rect x="1100" y="701" width="120" height="15" fill="#ECE9DA" />
<text x="1103.48" y="720" font-family="Liberation Sans" font-size="20" font-weight="400" fill="#000000" textLength="113.19" lengthAdjust="spacingAndGlyphs" xml:space="preserve" >Finger Status</text>
<text x="1201.66" y="753" font-family="Liberation Sans" font-size="21" font-weight="400" fill="#000000" textLength="80.72" lengthAdjust="spacingAndGlyphs" xml:space="preserve" >Position</text>
<text x="1113.19" y="940" font-family="Liberation Sans" font-size="21" font-weight="400" fill="#000000" textLength="34.81" lengthAdjust="spacingAndGlyphs" xml:space="preserve" >Dry</text>
<text x="1218.00" y="940" font-family="Liberation Sans" font-size="21" font-weight="400" fill="#000000" textLength="40.65" lengthAdjust="spacingAndGlyphs" xml:space="preserve" >Wet</text>
<text x="1315.69" y="940" font-family="Liberation Sans" font-size="21" font-weight="400" fill="#000000" textLength="47.20" lengthAdjust="spacingAndGlyphs" xml:space="preserve" >Dark</text></svg>
</body></html>
